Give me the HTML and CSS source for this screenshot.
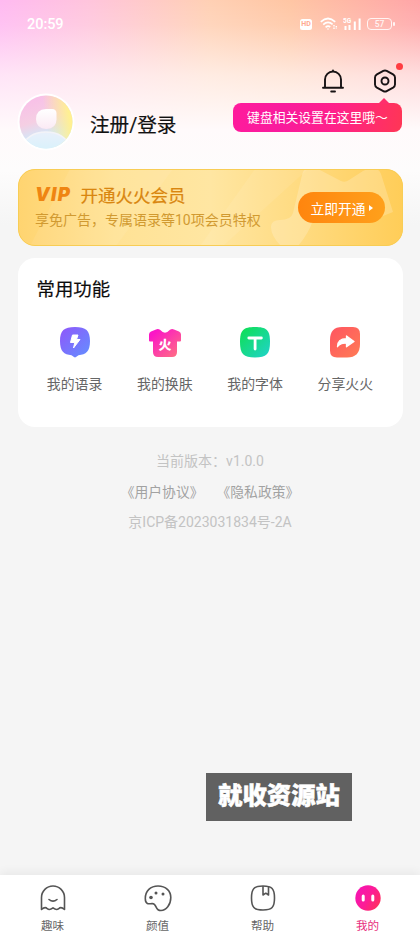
FILE: index.html
```html
<!DOCTYPE html>
<html lang="zh-CN">
<head>
<meta charset="utf-8">
<title>我的</title>
<link rel="stylesheet" href="styles.css">
</head>
<body>
<div class="page">
  <header class="status">
    <span class="time">20:59</span>
    <div class="signals">
      <span class="hd">HD</span>
      <svg class="wifi" width="18" height="14" viewBox="0 0 18 14" fill="none" stroke="#fff" stroke-width="1.7"><path d="M.8 4.8Q8-1.8 15.2 4.8M3.2 7.6Q8 3.4 12.6 7.4M5.6 10.3Q8 8.2 10.2 10"/><circle cx="8" cy="12" r=".8" fill="#fff" stroke="none"/><path d="M14 8v4M16.3 9v3" stroke-width="1.4" stroke-dasharray="1.5 1"/></svg>
      <svg class="cell" width="19" height="15" viewBox="0 0 19 15"><text x="0" y="6" class="five-g">5G</text><path d="M2.5 9v4M6.5 8v5M11.8 4.5V13M16.6 1.5V13" stroke="#fff" stroke-width="2"/></svg>
      <span class="battery">57</span>
    </div>
  </header>

  <section class="profile">
    <svg class="avatar" width="58" height="58" viewBox="0 0 58 58">
      <defs>
        <linearGradient id="av" x1=".2" y1=".05" x2=".5" y2="1"><stop stop-color="#f8bfe8"/><stop offset=".45" stop-color="#f5cfe3"/><stop offset=".75" stop-color="#d2e8f8"/><stop offset="1" stop-color="#d4f3fb"/></linearGradient>
        <linearGradient id="yl" x1=".5" y1=".5" x2="1" y2=".42"><stop stop-color="#ffe99a" stop-opacity="0"/><stop offset=".9" stop-color="#fff092"/></linearGradient>
        <linearGradient id="hdg" x1="0" y1="0" x2="0" y2="1"><stop stop-color="#fff"/><stop offset="1" stop-color="#fbeaf4"/></linearGradient>
        <linearGradient id="bd" x1="0" y1="0" x2="0" y2="1"><stop stop-color="#e9f0fb"/><stop offset="1" stop-color="#cff2fb"/></linearGradient>
        <clipPath id="ac"><circle cx="29" cy="29" r="26.5"/></clipPath>
      </defs>
      <circle cx="29" cy="29" r="28.5" fill="#fff"/>
      <circle cx="29" cy="29" r="26.5" fill="url(#av)"/>
      <circle cx="29" cy="29" r="26.5" fill="url(#yl)"/>
      <g clip-path="url(#ac)"><ellipse cx="29" cy="53" rx="22" ry="14" fill="url(#bd)" stroke="#f3f3f8" stroke-width="1.5"/></g>
      <path d="M29 16h6q4.500 0 4.500 4.500v6q0 9-10.200 9.500-10.300-.5-10.300-10t10-10z" fill="url(#hdg)"/>
    </svg>
    <h1 class="login">注册/登录</h1>
    <div class="tools">
      <div class="tool-icons">
        <svg width="24" height="26" viewBox="0 0 24 26" fill="none" stroke="#171214" stroke-width="1.9" stroke-linecap="round"><path d="M4 19.500V11.500a8 8 0 0 1 16 0v8M2 19.700h20M12 2.500v1M10.200 23.500h3.800"/></svg>
        <div class="gear">
          <svg width="24" height="26" viewBox="0 0 24 26" fill="none" stroke="#171214" stroke-width="1.900" stroke-linejoin="round"><path d="M10.300 2.900q1.700-.9 3.400 0l6.400 3.500q1.900 1.100 1.900 3v7.200q0 1.900-1.900 3l-6.400 3.500q-1.700.9-3.400 0l-6.400-3.500q-1.900-1.100-1.900-3V9.400q0-1.900 1.900-3z"/><circle cx="12" cy="13" r="3.500"/></svg>
          <i class="dot"></i>
        </div>
      </div>
      <div class="tip">键盘相关设置在这里哦～</div>
    </div>
  </section>

  <section class="vip">
    <svg class="vip-art" width="385" height="77" viewBox="0 0 385 77">
      <path d="M52 0H155L98 77H12z" fill="#fff" opacity=".07"/>
      <path d="M237 0H290L205 77H182z" fill="#fff" opacity=".08"/>
      <path d="M287 0h13l23 12q4 2 8-1l14-9q3-2 7-2h5q4 0 6 5l12 38-20 8h-60q-4 13-15 26h-17q-10-10-10-19 0-7 9-7 11 0 13-7L284 6q1-4 3-6z" fill="#fff" opacity=".2"/>
    </svg>
    <div class="vip-copy">
      <div class="vip-title"><span class="vip-logo">VIP</span><span>开通火火会员</span></div>
      <p>享免广告，专属语录等10项会员特权</p>
    </div>
    <button class="open">立即开通<i></i></button>
  </section>

  <section class="card">
    <h2>常用功能</h2>
    <div class="grid">
      <div class="item">
        <svg width="34" height="34" viewBox="0 0 34 34"><defs><linearGradient id="g1" x2="1" y2="1"><stop offset=".1" stop-color="#8b5cfb"/><stop offset="1" stop-color="#6290ff"/></linearGradient></defs><path d="M17 2c11 0 15 3.500 15 14s-4 13.500-11.500 14.200L18 32q-1 .8-2 0l-2.500-1.800C6 29.500 2 26.500 2 16S6 2 17 2z" fill="url(#g1)"/><path d="M14.500 10h5.500l-1.500 4.500h3.500L15.500 23l1.300-5.500h-4.300z" fill="#fff" stroke="#fff" stroke-linejoin="round"/></svg>
        <span>我的语录</span>
      </div>
      <div class="item">
        <svg width="34" height="34" viewBox="0 0 34 34"><defs><linearGradient id="g2" x2="1" y2="1"><stop offset=".15" stop-color="#fb16c7"/><stop offset="1" stop-color="#ff757e"/></linearGradient></defs><path d="M8 4.500q2-1 4 .3Q17 10.500 22 4.800q2-1.300 4-.3l5 2q2 .8 2 3v6q0 1-1 1h-3V27q0 5-5 5H10q-5 0-5-5V16.500H2q-1 0-1-1v-6q0-2.200 2-3z" fill="url(#g2)"/><text x="17" y="24.200" class="fire">火</text></svg>
        <span>我的换肤</span>
      </div>
      <div class="item">
        <svg width="34" height="34" viewBox="0 0 34 34"><defs><linearGradient id="g3" x2="1" y2="1"><stop offset=".1" stop-color="#10de5c"/><stop offset="1" stop-color="#20d3cc"/></linearGradient></defs><path d="M17 2C28.500 2 32 5 32 17s-3.500 15.500-15 15.500S2 29 2 17 5.500 2 17 2z" fill="url(#g3)"/><path d="M10.800 13h12.600M17.100 13v11" stroke="#fff" stroke-width="2.800" stroke-linecap="round"/></svg>
        <span>我的字体</span>
      </div>
      <div class="item">
        <svg width="34" height="34" viewBox="0 0 34 34"><defs><linearGradient id="g4" x2="1" y2="1"><stop offset=".15" stop-color="#ff5a5f"/><stop offset="1" stop-color="#ff7c55"/></linearGradient></defs><path d="M14 2h11q7 0 7 7v10q0 13.500-13 13.500H9q-7 0-7-7V15Q2 2 14 2z" fill="url(#g4)"/><path d="M18.500 11l7.500 5.500-7.500 5.300v-3.500q-5.500-.7-9 3.400 0-8 9-8z" fill="#fff" stroke="#fff" stroke-width="1.300" stroke-linejoin="round"/></svg>
        <span>分享火火</span>
      </div>
    </div>
  </section>

  <footer class="about">
    <p>当前版本：v1.0.0</p>
    <p class="links"><span>《用户协议》</span><span>《隐私政策》</span></p>
    <p>京ICP备2023031834号-2A</p>
  </footer>

  <div class="stamp">就收资源站</div>

  <nav class="tabs">
    <div class="tab">
      <svg width="28" height="28" viewBox="0 0 28 28" fill="none" stroke="#555" stroke-width="1.600" stroke-linecap="round" stroke-linejoin="round"><path d="M2.500 25.500V13.500a11.500 11.500 0 0 1 23 0v12q-3.500-3.200-5.800-.8-2.200 2-5.700-.8-3.500 2.800-5.700.8-2.300-2.400-5.800.8z"/><path d="M10 15.500q4 3.300 8 0"/></svg>
      <span>趣味</span>
    </div>
    <div class="tab">
      <svg width="28" height="28" viewBox="0 0 28 28" fill="none" stroke="#555" stroke-width="1.600"><path d="M14 2c8 0 12.800 5 12.800 11.500C26.800 21 22 26.500 17 26.500c-6.500 0-3.500-6.700-8.800-7C4.500 20 1.300 20.500 1.300 14.500 1.300 7 6.500 2 14 2z"/><g fill="#555" stroke="none"><circle cx="7" cy="13.500" r="1.800"/><circle cx="12" cy="9" r="1.500"/><circle cx="19" cy="10" r="1.500"/></g></svg>
      <span>颜值</span>
    </div>
    <div class="tab">
      <svg width="28" height="28" viewBox="0 0 28 28" fill="none" stroke="#555" stroke-width="1.600" stroke-linejoin="round"><path d="M14 2c9 0 11.500 2.500 11.500 12S23 26 14 26 2.500 23.500 2.500 14 5 2 14 2z"/><path d="M14 2v9l2.800-1.800L19.500 11V2.500"/></svg>
      <span>帮助</span>
    </div>
    <div class="tab active">
      <svg width="28" height="28" viewBox="0 0 28 28"><defs><linearGradient id="me" y1=".2" x2="1" y2=".8"><stop stop-color="#f513b5"/><stop offset=".5" stop-color="#fc1c97"/><stop offset="1" stop-color="#ff3158"/></linearGradient></defs><circle cx="14" cy="14" r="12.700" fill="url(#me)"/><path d="M9.200 12v4M18.800 12v4" stroke="#fff" stroke-width="3" stroke-linecap="round"/></svg>
      <span>我的</span>
    </div>
  </nav>
</div>
</body>
</html>
```
FILE: styles.css
```css
* { box-sizing: border-box; }
body, h1, h2, p { margin: 0; font-weight: 400; }
body { font-family: Roboto, "Noto Sans CJK SC", sans-serif; }
svg { display: block; flex: none; }

.page {
  width: 420px;
  height: 938px;
  display: flex;
  flex-direction: column;
  overflow: hidden;
  background:
    linear-gradient(180deg, rgba(255,255,255,0) 0, rgba(255,255,255,.12) 25px, rgba(255,250,250,.66) 75px, #fffafb 130px, #fdfcfc 170px, #f5f5f5 225px),
    linear-gradient(90deg, #ffbaf1 0, #ffc5dc 90px, #ffd0b4 210px, #ffc6a4 290px, #ffa5a8 420px);
}

.status {
  height: 48px;
  padding: 0 28px 0 27px;
  display: flex;
  align-items: center;
  justify-content: space-between;
  color: #fff;
}
.time { font-size: 14.5px; font-weight: 500; letter-spacing: -.05px; }
.signals { display: flex; align-items: center; }
.hd {
  width: 12px; height: 11px; border-radius: 2.5px;
  background: #fff; color: #ffab90;
  font: 700 7px/11px Roboto, sans-serif;
  text-align: center;
}
.wifi { margin-left: 8px; }
.cell { margin-left: 5px; }
.five-g { font: 700 6.500px Roboto, sans-serif; fill: #fff; }
.battery {
  position: relative;
  width: 25px; height: 12px; margin-left: 5px;
  border: 1.5px solid #fff; border-radius: 4px;
  font: 500 8.500px/10px Roboto, sans-serif;
  text-align: center;
  opacity: .85;
}
.battery::after {
  content: ""; position: absolute; right: -3.500px; top: 2.500px;
  width: 2px; height: 4px; border-radius: 1px; background: #fff;
}

.profile { height: 121px; padding: 0 18px 0 17px; display: flex; }
.avatar { margin-top: 45px; }
.login {
  margin: 62px 0 0 15px;
  font-size: 19.600px; line-height: 31px; color: #111;
  -webkit-text-stroke: .2px #111;
}
.tools { margin-left: auto; width: 169px; padding-top: 20px; }
.tool-icons { display: flex; justify-content: flex-end; gap: 28px; padding-right: 5.500px; }
.gear { position: relative; }
.dot { position: absolute; right: -6px; top: -5px; width: 7px; height: 7px; border-radius: 50%; background: #ff3d42; }
.tip {
  position: relative;
  height: 29px; margin-top: 9px; border-radius: 8px;
  background: linear-gradient(100deg, #ff1b9c 0, #f91b9d 30%, #ff218a 60%, #ff3655 100%);
  color: #fff; font-size: 12.800px; line-height: 29px; text-align: center; white-space: nowrap;
}
.tip::before {
  content: ""; position: absolute; right: 12px; top: -5px;
  border: 6px solid transparent; border-top: 0; border-bottom-color: #ff2e6c;
}

.vip {
  position: relative;
  flex: none; height: 77px; margin: 0 17.500px; padding: 0 17.500px 0 17.500px;
  display: flex; align-items: center; justify-content: space-between;
  border-radius: 17px; overflow: hidden;
  background: linear-gradient(90deg, #ffd470 0, #ffe295 25%, #ffe6a2 50%, #ffda7e 75%, #ffcd58 100%);
}
.vip-art { position: absolute; inset: 0; }
.vip::after { content: ""; position: absolute; inset: 0; border: 1.500px solid #f8cd55; border-radius: 17px; }
.vip-copy { position: relative; }
.vip-title { display: flex; align-items: center; height: 25px; font-size: 17.500px; color: #d9860f; }
.vip-title span:last-child { -webkit-text-stroke: .2px #d9860f; }
.vip-logo { width: 45.500px; font: italic 900 18.500px/25px Inter, sans-serif; letter-spacing: 1.300px; color: #ef8512; }
.vip p { font-size: 14px; line-height: 27px; color: #d19a31; white-space: nowrap; }
.open {
  position: relative;
  width: 87px; height: 31px; padding: 0; border: 0; border-radius: 16px;
  display: flex; align-items: center; justify-content: center; gap: 3px;
  background: linear-gradient(90deg, #ff850e, #ffa01b);
  color: #fff; font: 400 13.800px "Noto Sans CJK SC", sans-serif;
}
.open i { border: 3px solid transparent; border-left: 4px solid #fff; border-right: 0; }

.card { flex: none; height: 169px; margin: 12px 17.500px 0; padding: 17px 12px 0; border-radius: 17px; background: #fff; }
.card h2 { padding-left: 7px; font-size: 18.400px; line-height: 29px; color: #0c0c0c; -webkit-text-stroke: .2px #0c0c0c; }
.grid { display: grid; grid-template-columns: repeat(4, 1fr); margin-top: 21px; }
.item { display: flex; flex-direction: column; align-items: center; gap: 13px; font-size: 13.900px; line-height: 24px; color: #666; }
.fire { font: 900 13px "Noto Sans CJK SC", sans-serif; fill: #fff; text-anchor: middle; }

.about { padding-top: 19px; text-align: center; font-size: 14px; line-height: 30.500px; color: #c3c3c3; }
.links { display: flex; justify-content: center; gap: 13px; color: #a2a2a2; font-size: 13.800px; }

.stamp {
  width: 146px; height: 48px; margin: auto 0 54px 206px;
  background: #616161; color: #fff; text-align: center;
  font: 900 24.400px/41px "Noto Sans CJK SC", sans-serif;
  -webkit-text-stroke: .5px #fff;
}

.tabs {
  flex: none; height: 63px; padding-top: 9px;
  display: grid; grid-template-columns: repeat(4, 1fr);
  background: #fff; box-shadow: 0 -3px 9px rgba(0,0,0,.055);
}
.tab { display: flex; flex-direction: column; align-items: center; gap: 5px; font-size: 11.600px; line-height: 18px; color: #666; }
.active { color: #e72f7e; }
```
